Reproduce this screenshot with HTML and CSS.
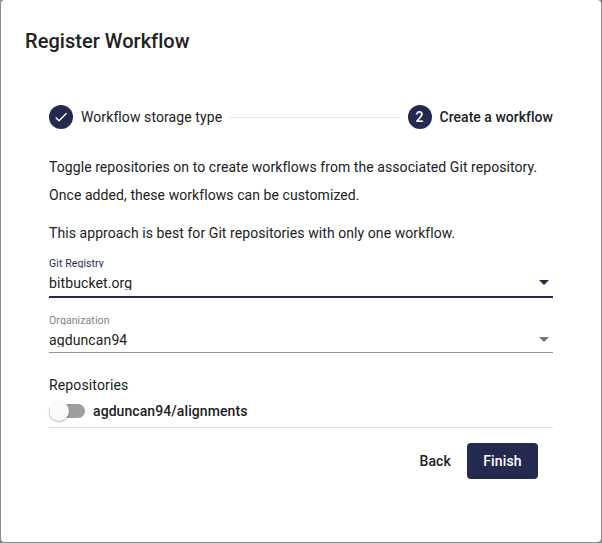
FILE: index.html
```html
<!DOCTYPE html>
<html lang="en">
<head>
<meta charset="utf-8">
<title>Register Workflow</title>
<link rel="stylesheet" href="styles.css">
</head>
<body>
<main class="dialog">
  <h1 class="title"><span>Register Workflow</span></h1>
  <div class="stepper">
    <div class="step">
      <span class="badge"><svg width="16" height="16" viewBox="0 0 24 24"><path fill="#fff" d="M9 16.17 4.83 12l-1.42 1.41L9 19 21 7l-1.41-1.41z"/></svg></span>
      <span class="step-label">Workflow storage type</span>
    </div>
    <div class="connector"></div>
    <div class="step active">
      <span class="badge">2</span>
      <span class="step-label">Create a workflow</span>
    </div>
  </div>
  <section class="content">
    <p class="intro"><span>Toggle repositories on to create workflows from the associated Git repository.</span><br><span>Once added, these workflows can be customized.</span></p>
    <p class="hint"><span>This approach is best for Git repositories with only one workflow.</span></p>
    <div class="field focused">
      <label class="field-label"><span>Git Registry</span></label>
      <div class="select"><span class="value">bitbucket.org</span><i class="arrow"></i></div>
    </div>
    <div class="field">
      <label class="field-label"><span>Organization</span></label>
      <div class="select"><span class="value">agduncan94</span><i class="arrow"></i></div>
    </div>
    <h2 class="subhead"><span>Repositories</span></h2>
    <div class="repo">
      <div class="toggle"><div class="thumb"></div></div>
      <span class="repo-name">agduncan94/alignments</span>
    </div>
    <div class="actions">
      <button class="btn"><span>Back</span></button>
      <button class="btn primary"><span>Finish</span></button>
    </div>
  </section>
</main>
</body>
</html>
```
FILE: styles.css
```css
* { box-sizing: border-box; }
body {
  margin: 0;
  padding: 0 1px 1px;
  height: 543px;
  background: #8d8d8d;
  font-family: Roboto, "Liberation Sans", sans-serif;
  font-size: 14px;
  color: #212121;
  overflow: hidden;
}
.dialog {
  height: 542px;
  padding: 24px;
  background: #fff;
  border-radius: 4px;
}
.title {
  margin: 0;
  height: 32px;
  font-size: 20px;
  line-height: 34px;
  font-weight: 500;
  letter-spacing: 0.04px;
}
.stepper {
  display: flex;
  align-items: center;
  height: 72px;
  margin: 25px 24px 0;
}
.step { display: flex; align-items: center; gap: 8px; white-space: nowrap; }
.badge {
  display: flex;
  align-items: center;
  justify-content: center;
  width: 24px;
  height: 24px;
  border-radius: 50%;
  background: #222a4f;
  color: #fff;
  font-weight: 500;
}
.step-label { letter-spacing: 0.09px; }
.active .step-label { font-weight: 500; letter-spacing: 0.02px; }
.connector { flex: 1; height: 1px; margin: 0 8px; background: #e0e0e0; }
.content { padding: 0 24px; }
p { margin: 0; line-height: 28px; letter-spacing: 0.07px; white-space: nowrap; }
.intro { height: 56px; }
.hint { margin-top: 10px; }
.field { height: 57px; padding-top: 10px; }
.field-label {
  display: block;
  height: 11px;
  overflow: hidden;
  font-size: 10.5px;
  line-height: 13px;
  letter-spacing: 0.1px;
  color: #828282;
}
.select {
  display: flex;
  justify-content: space-between;
  height: 28px;
  border-bottom: 1px solid #949494;
}
.value {
  height: 15px;
  margin-top: 7px;
  overflow: hidden;
  line-height: 16px;
  letter-spacing: 0.11px;
}
.arrow {
  width: 10px;
  height: 5px;
  margin: 12px 4px 0 0;
  background: #757575;
  clip-path: polygon(0 0, 100% 0, 50% 100%);
}
.focused .field-label { color: #222a4f; }
.focused .select { height: 30px; border-bottom: 2px solid #222a4f; }
.focused .arrow { background: #222a4f; }
.subhead {
  margin: 14px 0 0;
  font-size: 14px;
  line-height: 20px;
  font-weight: 400;
  letter-spacing: 0.14px;
}
.repo {
  display: flex;
  align-items: center;
  height: 33px;
  border-bottom: 1px solid #e0e0e0;
}
.toggle {
  width: 36px;
  height: 14px;
  margin-right: 8px;
  border-radius: 7px;
  background: #9e9e9e;
}
.thumb {
  width: 20px;
  height: 20px;
  margin-top: -3px;
  border-radius: 50%;
  background: #fafafa;
  box-shadow: 0 1px 2px rgba(0, 0, 0, .3);
}
.repo-name { font-weight: 500; letter-spacing: 0.08px; }
.actions { display: flex; justify-content: flex-end; padding: 15px 15px 0 0; }
.btn {
  height: 36px;
  padding: 0 16px;
  border: 0;
  border-radius: 4px;
  background: none;
  color: #212121;
  font: 500 14px Roboto, "Liberation Sans", sans-serif;
  letter-spacing: 0.14px;
}
.primary { width: 71px; background: #222a4f; color: #fff; }
```
